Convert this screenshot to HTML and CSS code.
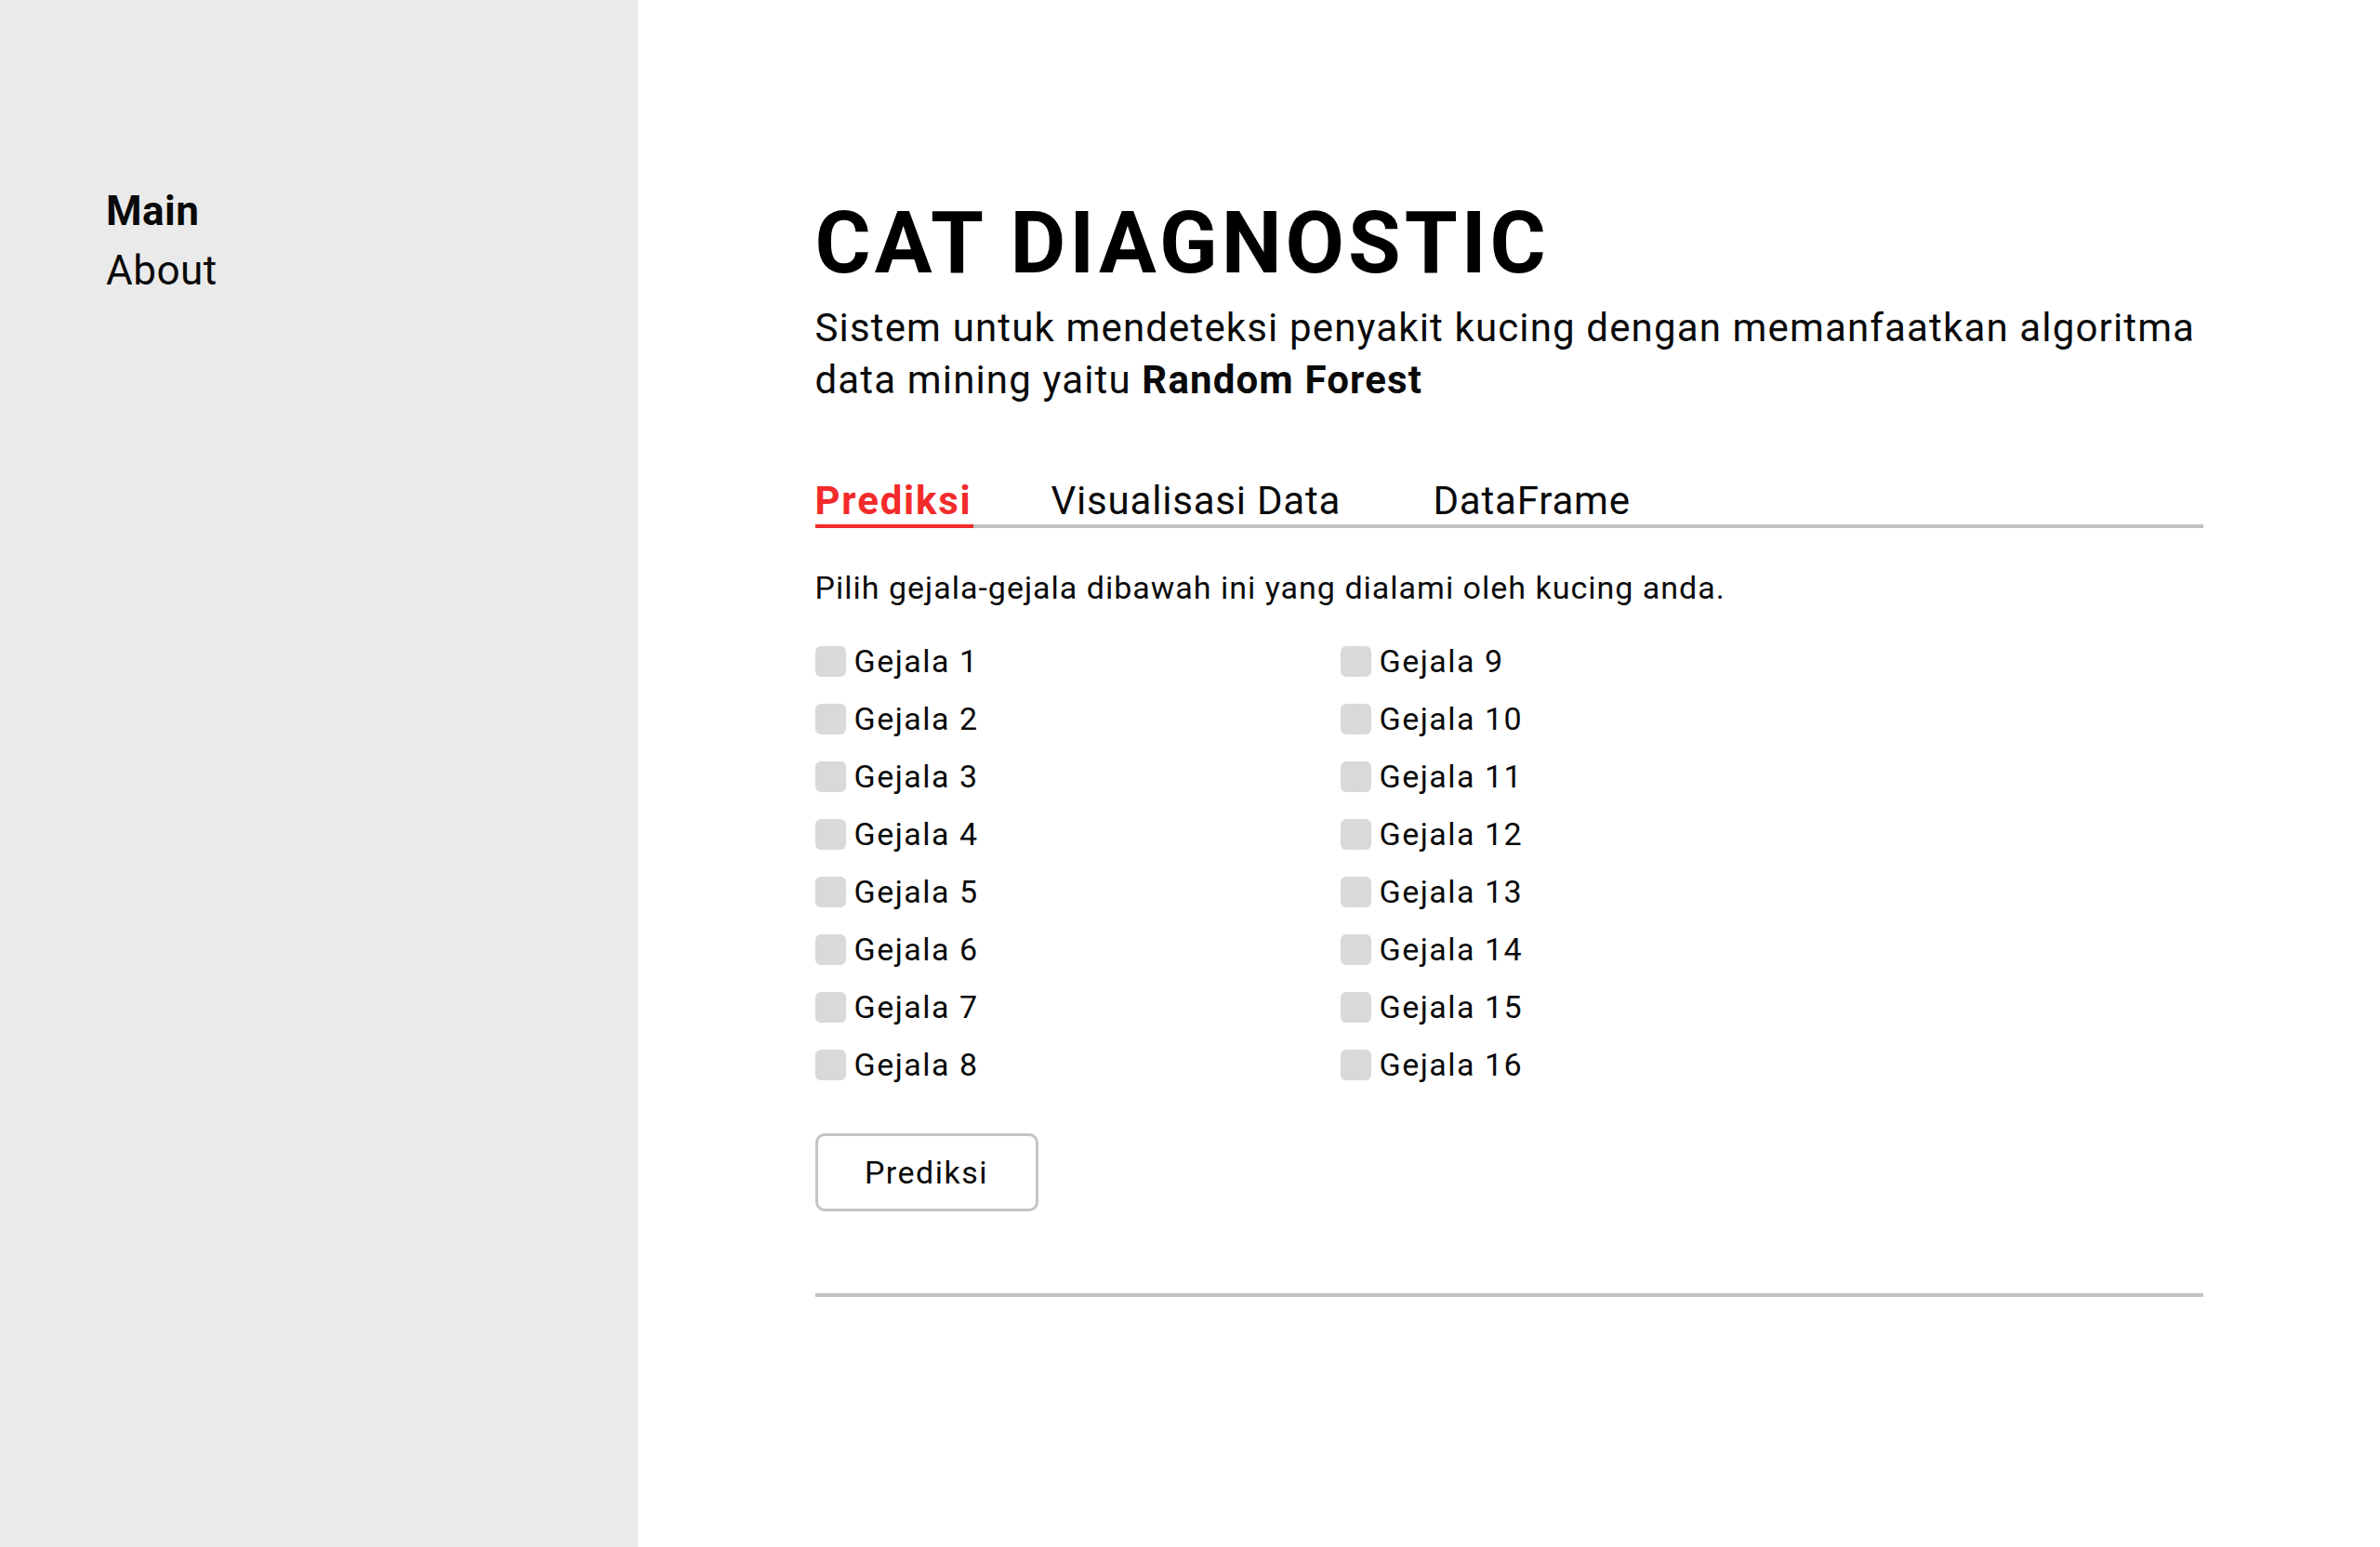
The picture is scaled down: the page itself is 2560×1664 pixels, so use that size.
FILE: index.html
```html
<!DOCTYPE html>
<html lang="id">
<head>
<meta charset="utf-8">
<title>Cat Diagnostic</title>
<link rel="stylesheet" href="styles.css">
</head>
<body>
<div class="app">
  <aside class="sidebar">
    <nav class="nav">
      <a class="nav-item active">Main</a>
      <a class="nav-item">About</a>
    </nav>
  </aside>
  <main class="main">
    <div class="block">
      <h1 class="title">CAT DIAGNOSTIC</h1>
      <p class="subtitle">Sistem untuk mendeteksi penyakit kucing dengan memanfaatkan algoritma data mining yaitu <strong>Random Forest</strong></p>
      <div class="tabs">
        <div class="tab tab-pred active">Prediksi</div>
        <div class="tab tab-vis">Visualisasi Data</div>
        <div class="tab tab-df">DataFrame</div>
      </div>
      <p class="instr">Pilih gejala-gejala dibawah ini yang dialami oleh kucing anda.</p>
      <div class="cols">
        <div class="col">
          <label class="cb"><span class="box"></span><span>Gejala 1</span></label>
          <label class="cb"><span class="box"></span><span>Gejala 2</span></label>
          <label class="cb"><span class="box"></span><span>Gejala 3</span></label>
          <label class="cb"><span class="box"></span><span>Gejala 4</span></label>
          <label class="cb"><span class="box"></span><span>Gejala 5</span></label>
          <label class="cb"><span class="box"></span><span>Gejala 6</span></label>
          <label class="cb"><span class="box"></span><span>Gejala 7</span></label>
          <label class="cb"><span class="box"></span><span>Gejala 8</span></label>
        </div>
        <div class="col">
          <label class="cb"><span class="box"></span><span>Gejala 9</span></label>
          <label class="cb"><span class="box"></span><span>Gejala 10</span></label>
          <label class="cb"><span class="box"></span><span>Gejala 11</span></label>
          <label class="cb"><span class="box"></span><span>Gejala 12</span></label>
          <label class="cb"><span class="box"></span><span>Gejala 13</span></label>
          <label class="cb"><span class="box"></span><span>Gejala 14</span></label>
          <label class="cb"><span class="box"></span><span>Gejala 15</span></label>
          <label class="cb"><span class="box"></span><span>Gejala 16</span></label>
        </div>
      </div>
      <button class="btn">Prediksi</button>
      <div class="divider"></div>
    </div>
  </main>
</div>
</body>
</html>
```
FILE: styles.css
```css
* { box-sizing: border-box; }
html, body {
  margin: 0;
  padding: 0;
  width: 2560px;
  height: 1664px;
  overflow: hidden;
  background: #ffffff;
  font-family: Roboto, "Liberation Sans", sans-serif;
  color: #0a0a0a;
}
.app {
  display: flex;
  height: 1664px;
}
.sidebar {
  width: 686px;
  flex: 0 0 686px;
  background: #eaeaea;
  padding: 195px 0 0 114px;
}
.nav {
  display: flex;
  flex-direction: column;
}
.nav-item {
  font-size: 44px;
  line-height: 64px;
  color: #0a0a0a;
  font-weight: 400;
  letter-spacing: 0.5px;
}
.nav-item.active { font-weight: 700; }
.main {
  flex: 1;
  display: flex;
  justify-content: center;
}
.block {
  width: 1493px;
  padding-top: 207px;
}
.title {
  margin: 0;
  font-size: 92px;
  line-height: 110px;
  font-weight: 700;
  letter-spacing: 4px;
  color: #000;
}
.subtitle {
  margin: 8px 0 0 0;
  font-size: 42px;
  line-height: 56px;
  font-weight: 400;
  letter-spacing: 1.15px;
}
.subtitle strong { font-weight: 700; }
.tabs {
  margin-top: 78px;
  display: flex;
  border-bottom: 4px solid #c2c2c2;
}
.tab {
  font-size: 42px;
  line-height: 48px;
  padding-bottom: 1px;
  margin-bottom: -4px;
  letter-spacing: 0.8px;
  border-bottom: 4px solid transparent;
  white-space: nowrap;
}
.tab-pred { width: 170px; margin-right: 84px; letter-spacing: 1.8px; }
.tab-vis { width: 310px; margin-right: 101px; }
.tab.active {
  color: #f22b2b;
  font-weight: 700;
  border-bottom-color: #f22b2b;
}
.instr {
  margin: 40px 0 0 0;
  font-size: 34px;
  line-height: 48px;
  letter-spacing: 1px;
}
.cols {
  margin-top: 24px;
  display: grid;
  grid-template-columns: 565px 1fr;
}
.col {
  display: flex;
  flex-direction: column;
}
.cb {
  height: 62px;
  display: flex;
  align-items: center;
  gap: 9px;
  font-size: 34px;
  letter-spacing: 1.5px;
}
.box {
  width: 33px;
  height: 33px;
  border-radius: 6px;
  background: #d9d9d9;
  flex: 0 0 33px;
}
.btn {
  margin-top: 43px;
  width: 240px;
  height: 84px;
  border: 3px solid #c4c4c4;
  border-radius: 10px;
  background: #fff;
  font-family: Roboto, "Liberation Sans", sans-serif;
  font-size: 34px;
  letter-spacing: 1.5px;
  color: #0a0a0a;
  padding: 0;
}
.divider {
  margin-top: 88px;
  height: 4px;
  background: #c2c2c2;
}
```
